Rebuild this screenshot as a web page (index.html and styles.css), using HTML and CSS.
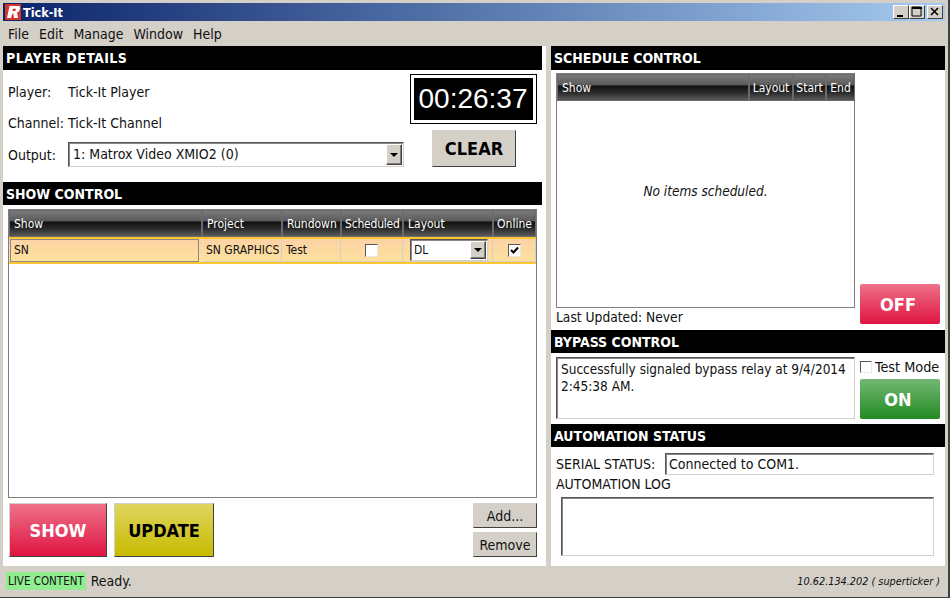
FILE: index.html
```html
<!DOCTYPE html>
<html lang="en">
<head>
<meta charset="utf-8">
<title>Tick-It</title>
<link rel="stylesheet" href="styles.css">
</head>
<body>
<div class="window">
  <div class="titlebar">
    <svg class="logo" width="16" height="16" viewBox="0 0 16 16"><rect width="16" height="16" fill="#d9342b"/><path d="M4.500 2H14.500L15 4.500L14 7.500L12 8.500L13 14H9L8.300 9.500H7.500L6 14H2ZM8 4.800L7.400 7H10.400L11 4.800Z" fill="#fff" fill-rule="evenodd"/></svg>
    <span class="title-text">Tick-It</span>
    <div class="winbtns">
      <div class="winbtn"><svg width="14" height="12" viewBox="0 0 14 12"><rect x="3" y="9" width="6" height="2" fill="#000"/></svg></div>
      <div class="winbtn"><svg width="14" height="12" viewBox="0 0 14 12"><path d="M2 1H11V10H2Z" fill="none" stroke="#000"/><rect x="2" y="1" width="10" height="2"/></svg></div>
      <div class="winbtn winbtn-close"><svg width="14" height="12" viewBox="0 0 14 12"><path d="M3 2L10 9M10 2L3 9" stroke="#000" stroke-width="1.600" fill="none"/></svg></div>
    </div>
  </div>
  <div class="menubar"><span>File</span><span>Edit</span><span>Manage</span><span>Window</span><span>Help</span></div>
  <div class="panes">
    <div class="pane pane-left">
      <div class="head head-player">PLAYER DETAILS</div>
      <div class="details">
        <div class="detail-fields">
          <div class="field"><span class="flabel">Player:</span><span>Tick-It Player</span></div>
          <div class="field"><span class="flabel">Channel:</span><span>Tick-It Channel</span></div>
          <div class="field field-output">
            <span class="flabel">Output:</span>
            <div class="combo combo-output"><span class="combo-text">1: Matrox Video XMIO2 (0)</span><span class="combo-arrow"><i></i></span></div>
          </div>
        </div>
        <div class="detail-side">
          <div class="timer"><div class="timer-inner">00:26:37</div></div>
          <div class="btn btn-clear">CLEAR</div>
        </div>
      </div>
      <div class="head head-show">SHOW CONTROL</div>
      <div class="show-body">
        <div class="grid show-grid">
          <div class="grid-head show-cols">
            <div class="hc">Show</div><div class="hc">Project</div><div class="hc">Rundown</div><div class="hc hc-tight">Scheduled</div><div class="hc">Layout</div><div class="hc hc-c">Online</div>
          </div>
          <div class="grid-row show-cols">
            <div class="cell cell-first">SN</div>
            <div class="cell">SN GRAPHICS</div>
            <div class="cell">Test</div>
            <div class="cell cell-c"><span class="check"></span></div>
            <div class="cell cell-combo"><div class="combo combo-layout"><span class="combo-text">DL</span><span class="combo-arrow"><i></i></span></div></div>
            <div class="cell cell-c"><span class="check"><svg width="11" height="11" viewBox="0 0 11 11"><path d="M2 5L4.500 7.500L9 2.500" fill="none" stroke="#000" stroke-width="2"/></svg></span></div>
          </div>
        </div>
        <div class="actions">
          <div class="btn big big-red">SHOW</div>
          <div class="btn big big-yellow">UPDATE</div>
          <div class="side-btns">
            <div class="btn small">Add...</div>
            <div class="btn small">Remove</div>
          </div>
        </div>
      </div>
    </div>
    <div class="pane pane-right">
      <div class="head">SCHEDULE CONTROL</div>
      <div class="schedule">
        <div class="schedule-main">
          <div class="grid sched-grid">
            <div class="grid-head sched-cols">
              <div class="hc">Show</div><div class="hc hc-c">Layout</div><div class="hc hc-c">Start</div><div class="hc hc-c">End</div>
            </div>
            <div class="empty">No items scheduled.</div>
          </div>
          <div class="updated">Last Updated: Never</div>
        </div>
        <div class="btn pill pill-red">OFF</div>
      </div>
      <div class="head head-bypass">BYPASS CONTROL</div>
      <div class="bypass">
        <div class="sunken msg">Successfully signaled bypass relay at 9/4/2014 2:45:38 AM.</div>
        <div class="bypass-side">
          <div class="test"><span class="check check-flat"></span><span>Test Mode</span></div>
          <div class="btn pill pill-green">ON</div>
        </div>
      </div>
      <div class="head head-auto">AUTOMATION STATUS</div>
      <div class="auto">
        <div class="serial"><span class="serial-label">SERIAL STATUS:</span><div class="sunken serial-box">Connected to COM1.</div></div>
        <div class="log-label">AUTOMATION LOG</div>
        <div class="sunken log"></div>
      </div>
    </div>
  </div>
  <div class="statusbar">
    <span class="live">LIVE CONTENT</span>
    <span class="ready">Ready.</span>
    <span class="user">10.62.134.202 ( superticker )</span>
  </div>
</div>
</body>
</html>
```
FILE: styles.css
```css
html, body { margin: 0; padding: 0; }
body {
  width: 950px;
  height: 598px;
  overflow: hidden;
  background: #d4d0c8;
  font-family: "DejaVu Sans", Verdana, sans-serif;
  font-stretch: condensed;
  font-size: 14px;
  color: #111;
}
.window {
  box-sizing: border-box;
  width: 950px;
  height: 598px;
  padding: 3px 3px 1px 3px;
  display: flex;
  flex-direction: column;
  border-right: 2px solid #404040;
  border-bottom: 1px solid #404040;
}
.titlebar {
  height: 18px;
  flex: none;
  display: flex;
  align-items: center;
  background: linear-gradient(90deg, #0a246a, #a6caf0);
  color: #fff;
  font-size: 12.500px;
  font-weight: bold;
}
.logo { flex: none; margin: 0 2px 0 2px; }
.title-text { flex: 1; }
.winbtns { display: flex; margin-right: 2px; }
.winbtn {
  box-sizing: border-box;
  width: 16px;
  height: 14px;
  background: #d4d0c8;
  border: 1px solid;
  border-color: #fff #404040 #404040 #fff;
  display: flex;
  align-items: center;
  justify-content: center;
  overflow: hidden;
}
.winbtn-close { margin-left: 2px; }
.menubar {
  height: 25px;
  flex: none;
  display: flex;
  align-items: center;
  gap: 10px;
  padding-left: 5px;
  box-sizing: border-box;
}
.panes {
  flex: 1;
  min-height: 0;
  display: flex;
  gap: 5px;
}
.pane { background: #fff; display: flex; flex-direction: column; }
.pane-left { width: 543px; flex: none; }
.pane-right { flex: 1; min-width: 0; }
.head {
  height: 24px;
  flex: none;
  box-sizing: border-box;
  background: #000;
  color: #fff;
  font-weight: bold;
  font-size: 14px;
  line-height: 24px;
  padding-left: 3px;
}
.pane-left .head { margin-right: 4px; }
.head-player { letter-spacing: 0.400px; }
.head-show { height: 23px; margin-top: 1px; line-height: 25px; }
.details {
  height: 111px;
  flex: none;
  display: flex;
  box-sizing: border-box;
}
.detail-fields { width: 406px; flex: none; padding: 6px 0 0 5px; box-sizing: border-box; }
.field { display: flex; align-items: center; height: 31px; }
.field-output { margin-top: 1px; }
.flabel { width: 60px; flex: none; }
.combo {
  box-sizing: border-box;
  display: flex;
  align-items: stretch;
  background: #fff;
  border: 1px solid;
  border-color: #555 #d4d0c8 #d4d0c8 #555;
  box-shadow: inset 1px 1px 0 #888;
}
.combo-output { width: 336px; height: 25px; }
.combo-text { flex: 1; padding: 2px 0 0 4px; line-height: 18px; }
.combo-arrow {
  width: 16px;
  flex: none;
  margin: 1px;
  background: #d4d0c8;
  border: 1px solid;
  border-color: #fff #404040 #404040 #fff;
  box-shadow: inset -1px -1px 0 #808080;
  box-sizing: border-box;
  display: flex;
  align-items: center;
  justify-content: center;
}
.combo-arrow i {
  width: 0;
  height: 0;
  border: 4px solid transparent;
  border-top: 4px solid #000;
  border-bottom: 0;
}
.detail-side {
  flex: none;
  width: 128px;
  display: flex;
  flex-direction: column;
  align-items: center;
  padding-top: 4px;
  box-sizing: border-box;
}
.timer {
  box-sizing: border-box;
  width: 127px;
  height: 50px;
  border: 1px solid #000;
  padding: 3px;
  background: #fff;
}
.timer-inner {
  height: 100%;
  background: #000;
  color: #fff;
  font-family: "Liberation Sans", Arial, sans-serif;
  font-stretch: normal;
  font-size: 28px;
  line-height: 42px;
  text-align: center;
}
.btn {
  box-sizing: border-box;
  display: flex;
  align-items: center;
  justify-content: center;
  border: 1px solid;
  border-color: #d4d0c8 #404040 #404040 #d4d0c8;
}
.btn-clear {
  width: 84px;
  height: 37px;
  margin-top: 6px;
  margin-left: 2px;
  background: #d4d0c8;
  font-weight: bold;
  font-size: 18px;
  color: #000;
}
.show-body {
  flex: 1;
  min-height: 0;
  display: flex;
  flex-direction: column;
  padding: 4px 9px 10px 5px;
}
.grid {
  box-sizing: border-box;
  border: 1px solid #808080;
  background: #fff;
}
.show-grid { height: 289px; flex: none; }
.grid-head { height: 27px; }
.show-cols { display: grid; grid-template-columns: 193px 80px 59px 62px 90px 43px; }
.sched-cols { display: grid; grid-template-columns: 192px 44px 33px 29px; }
.hc {
  box-sizing: border-box;
  background: linear-gradient(180deg, #7a7a7a 0, #5c5c5c 38%, #111 45%, #2a2a2a 70%, #5a5a5a 100%);
  border: 1px solid #6b6b6b;
  color: #fff;
  font-size: 12px;
  line-height: 26px;
  padding-left: 4px;
  white-space: nowrap;
  overflow: hidden;
}
.hc-c { text-align: center; padding-left: 0; }
.hc-tight { padding-left: 3px; letter-spacing: -0.200px; }
.grid-row {
  height: 27px;
  box-sizing: border-box;
  background: linear-gradient(180deg, #fdd2a6, #fde29c);
  border-top: 2px solid #fbc62f;
  border-bottom: 2px solid #fbc62f;
  border-right: 1px solid #fbc62f;
  font-size: 12px;
}
.cell {
  box-sizing: border-box;
  border-right: 1px solid #d4d0c8;
  border-bottom: 1px solid #d4d0c8;
  line-height: 22px;
  padding-left: 4px;
  white-space: nowrap;
  overflow: hidden;
}
.cell-first { border: 1px solid #8a8a8a; margin: 0 3px 0 1px; padding-left: 3px; line-height: 21px; }
.cell-c { display: flex; align-items: center; justify-content: center; padding: 0; }
.cell-combo { padding: 0 0 0 7px; }
.check {
  box-sizing: border-box;
  width: 13px;
  height: 13px;
  background: #fff;
  border: 1px solid;
  border-color: #555 #e8e8e8 #e8e8e8 #555;
  display: block;
}
.check svg { display: block; margin: 0; }
.check-flat { flex: none; width: 12px; height: 12px; }
.combo-layout { width: 78px; height: 22px; font-size: 12px; }
.combo-layout .combo-text { padding: 0 0 0 3px; line-height: 20px; }
.actions { display: flex; gap: 7px; margin-top: 5px; }
.big {
  height: 54px;
  font-weight: bold;
  font-size: 18px;
}
.big-red {
  width: 98px;
  margin-left: 1px;
  color: #fff;
  background: linear-gradient(180deg, #ee7189, #e01442);
}
.big-yellow {
  width: 100px;
  color: #000;
  background: linear-gradient(180deg, #dfd55f, #c8bb00);
}
.side-btns {
  margin-left: auto;
  display: flex;
  flex-direction: column;
  gap: 4px;
}
.small { width: 64px; height: 25px; background: #d4d0c8; font-size: 14px; }
.schedule {
  height: 260px;
  flex: none;
  box-sizing: border-box;
  display: flex;
  padding: 3px 5px 0 5px;
  gap: 5px;
}
.schedule-main { width: 299px; flex: none; }
.sched-grid { height: 235px; display: flex; flex-direction: column; }
.empty {
  flex: 1;
  display: flex;
  align-items: center;
  justify-content: center;
  font-style: italic;
  padding-bottom: 26px;
  font-size: 13.500px;
}
.updated { line-height: 18px; font-size: 13.700px; }
.pill {
  border: 0;
  border-radius: 2px;
  width: 80px;
  height: 40px;
  flex: none;
  color: #fff;
  font-weight: bold;
  font-size: 18px;
  padding-right: 4px;
}
.pill-red { align-self: flex-start; margin-top: 211px; background: linear-gradient(180deg, #ee7189, #e01442); }
.pill-green { background: linear-gradient(180deg, #74b774, #228b22); }
.head-bypass { height: 23px; line-height: 25px; }
.bypass {
  height: 71px;
  flex: none;
  box-sizing: border-box;
  padding: 4px 5px 0 5px;
  display: flex;
  gap: 5px;
}
.sunken {
  box-sizing: border-box;
  background: #fff;
  border: 1px solid;
  border-color: #555 #d4d0c8 #d4d0c8 #555;
  box-shadow: inset 1px 1px 0 #888;
}
.msg { width: 299px; height: 62px; padding: 3px 4px; line-height: 17px; font-size: 13.500px; }
.bypass-side { width: 80px; flex: none; display: flex; flex-direction: column; }
.test { display: flex; align-items: center; gap: 3px; height: 22px; padding-bottom: 2px; box-sizing: border-box; white-space: nowrap; font-size: 14.300px; }
.head-auto { height: 23px; line-height: 25px; }
.auto { flex: 1; min-height: 0; padding: 6px 11px 0 5px; }
.serial { display: flex; align-items: center; }
.serial-label { width: 109px; flex: none; }
.serial-box { flex: 1; height: 22px; line-height: 20px; padding-left: 3px; }
.log-label { height: 22px; line-height: 18px; }
.log { margin-left: 5px; height: 59px; }
.statusbar {
  height: 30px;
  flex: none;
  display: flex;
  align-items: center;
  box-sizing: border-box;
  padding: 0 5px 0 3px;
}
.live {
  background: #90ee90;
  font-size: 11.500px;
  padding: 0 2px;
  line-height: 18px;
  margin-right: 5px;
  white-space: nowrap;
}
.user { margin-left: auto; font-style: italic; font-size: 10.800px; }
```
